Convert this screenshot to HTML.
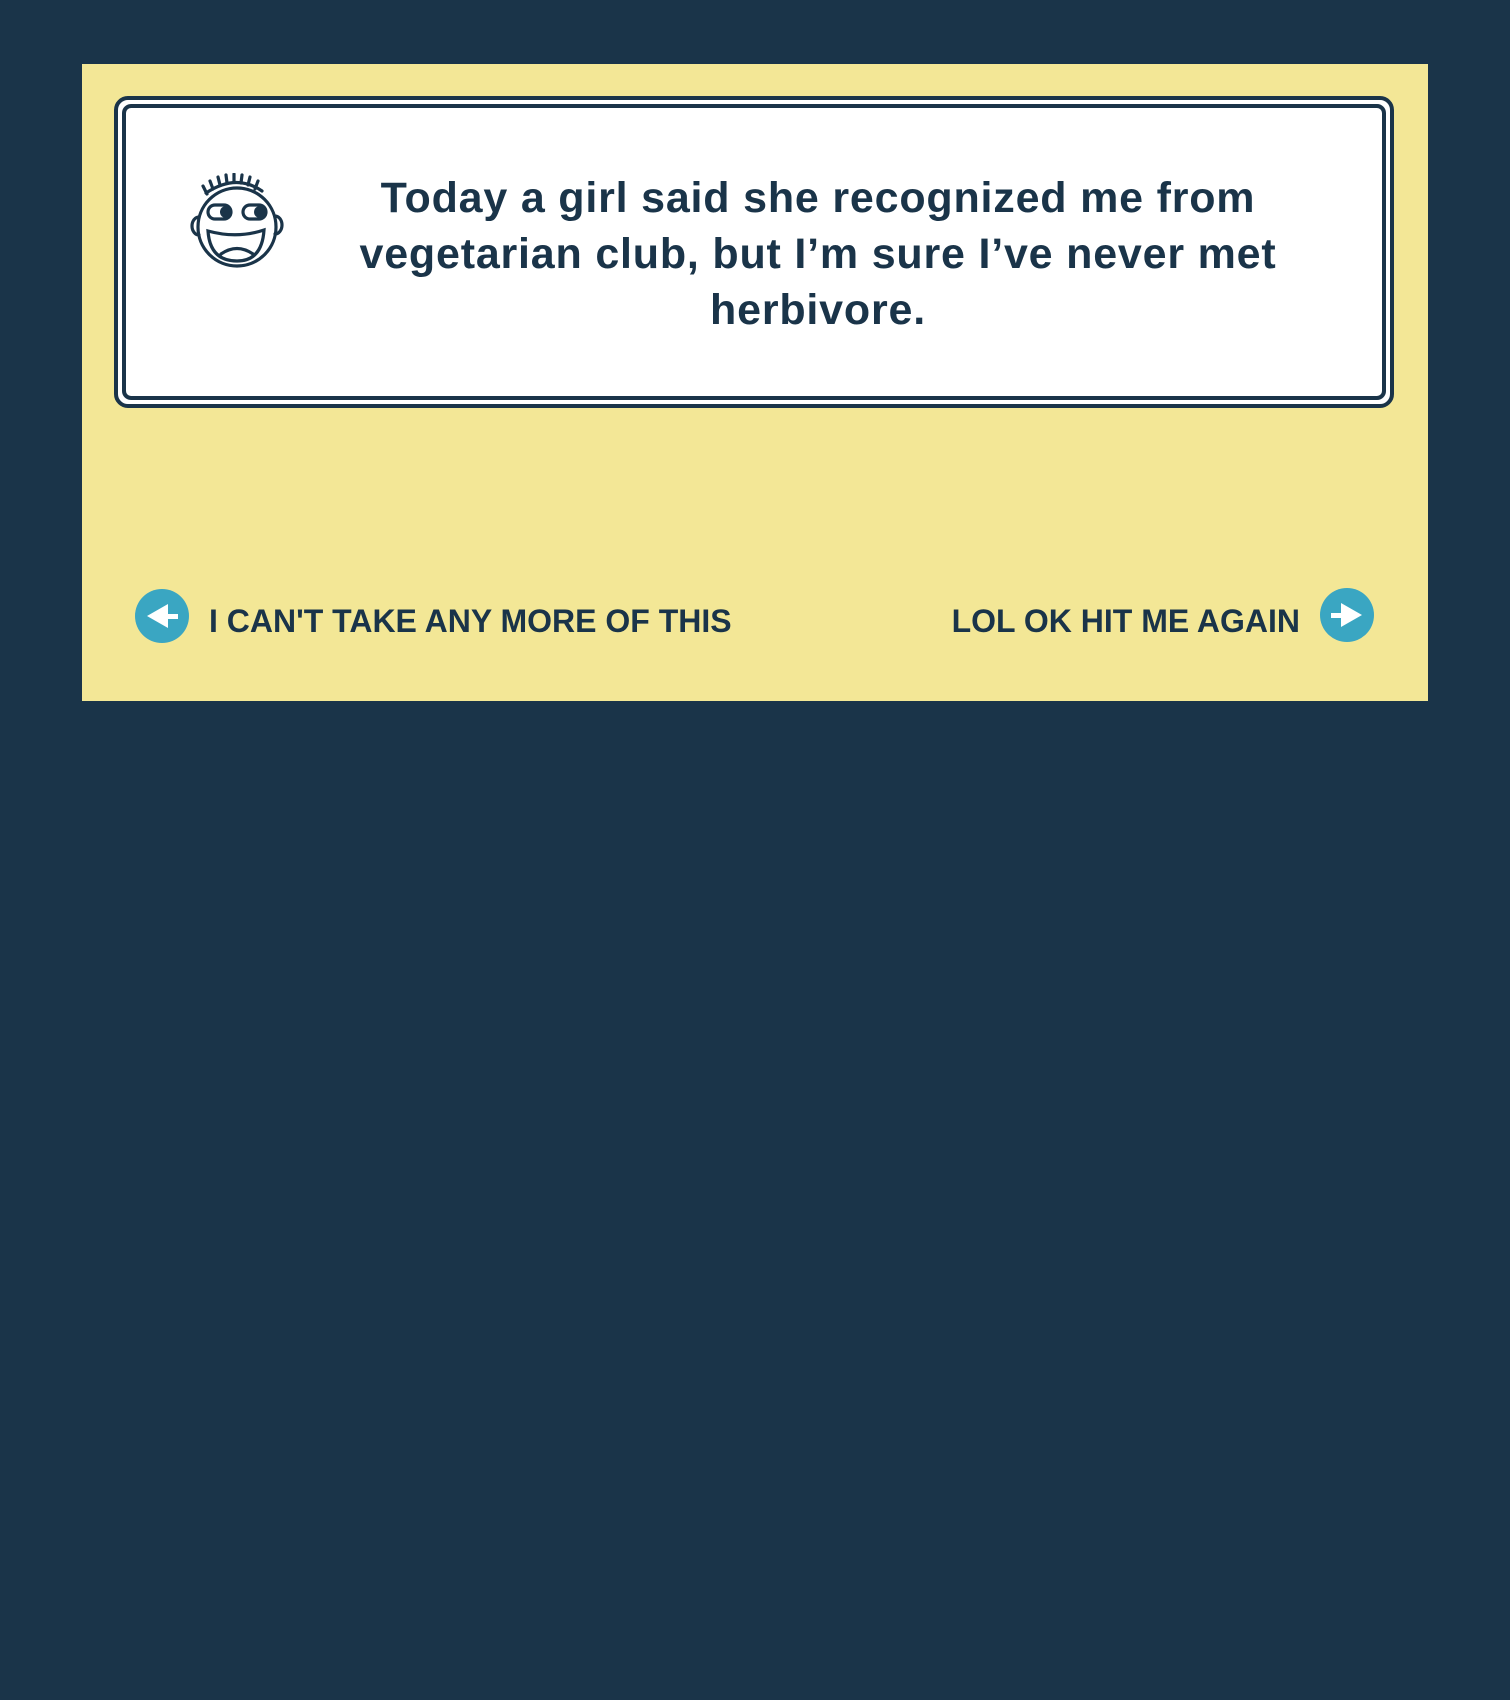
<!DOCTYPE html>
<html><head><meta charset="utf-8"><style>
html,body{margin:0;padding:0;background:#1a3449;width:1510px;height:1700px;overflow:hidden;font-family:"Liberation Sans",Arial,sans-serif;color:#1a3449}
.panel{position:absolute;left:82px;top:64px;width:1346px;height:637px;background:#f3e796}
.outer{position:absolute;left:32px;top:32px;width:1272px;height:304px;border:4px solid #1a3449;border-radius:14px;background:#fff}
.inner{position:absolute;left:4px;top:4px;right:4px;bottom:4px;border:4px solid #1a3449;border-radius:9px}
.q{position:absolute;left:0;width:1636px;text-align:center;font-weight:bold;font-size:43px;line-height:56px;letter-spacing:0.8px;white-space:nowrap}
.btn{position:absolute;font-weight:bold;font-size:32px;line-height:36px;white-space:nowrap}
</style></head><body>
<div class="panel">
 <div class="outer"><div class="inner"></div></div>
</div>
<svg style="position:absolute;left:180px;top:173px" width="110" height="100" viewBox="180 170 110 100">
 <g fill="none" stroke="#1a3449" stroke-width="3.2" stroke-linecap="round">
  <circle cx="237" cy="224" r="39"/>
  <path d="M199 214 a7 9 0 0 0 0 18"/>
  <path d="M275 213 a7 9 0 0 1 0 18"/>
  <path d="M206 190 Q236 170 262 188"/>
  <path d="M203 183 l4 8 M210 178 l3 8 M218 174 l2 8 M226 172 l1 8 M234 171 l0 8 M242 172 l-1 8 M250 174 l-2 8 M258 178 l-3 8"/>
  <rect x="208" y="202" width="23" height="14" rx="7"/>
  <rect x="243" y="202" width="23" height="14" rx="7"/>
  <path d="M208 228 Q237 236 264 227 Q262 258 237 258 Q210 258 208 228 Z"/>
  <path d="M221 251 Q237 240 253 251"/>
 </g>
 <circle cx="226" cy="209" r="6" fill="#1a3449"/>
 <circle cx="260" cy="209" r="6" fill="#1a3449"/>
</svg>
<div class="q" style="top:170px">Today a girl said she recognized me from</div>
<div class="q" style="top:226px">vegetarian club, but I’m sure I’ve never met</div>
<div class="q" style="top:282px">herbivore.</div>
<svg style="position:absolute;left:135px;top:589px" width="54" height="54" viewBox="0 0 54 54">
 <circle cx="27" cy="27" r="27" fill="#3aa6c2"/>
 <polygon points="12,27 33,15 33,39" fill="#fff"/>
 <rect x="32" y="25" width="11" height="5" fill="#fff"/>
</svg>
<div class="btn" style="left:209px;top:603px">I CAN'T TAKE ANY MORE OF THIS</div>
<div class="btn" style="right:210px;top:603px">LOL OK HIT ME AGAIN</div>
<svg style="position:absolute;left:1320px;top:588px" width="54" height="54" viewBox="0 0 54 54">
 <circle cx="27" cy="27" r="27" fill="#3aa6c2"/>
 <polygon points="42,27 21,15 21,39" fill="#fff"/>
 <rect x="11" y="25" width="11" height="5" fill="#fff"/>
</svg>
</body></html>
